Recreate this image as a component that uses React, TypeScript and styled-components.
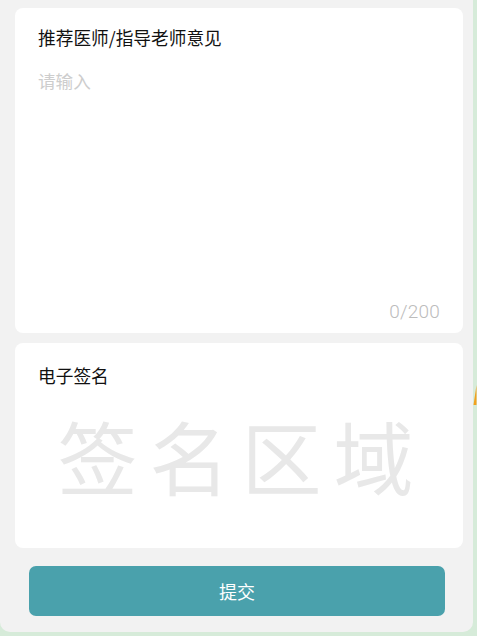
import React from "react";
import styled, { createGlobalStyle } from "styled-components";

const GlobalStyle = createGlobalStyle`
  html, body {
    margin: 0;
    padding: 0;
    height: 100%;
    background: #d6ebd9;
  }
  body {
    font-family: "Noto Sans CJK SC", "Liberation Sans", sans-serif;
    overflow: hidden;
  }
`;

function App(): React.ReactElement {
  return (
    <Page>
      <GlobalStyle />
      <Panel>
        <OpinionCard>
          <Title>推荐医师/指导老师意见</Title>
          <Placeholder>请输入</Placeholder>
          <Counter>0/200</Counter>
        </OpinionCard>
        <SignCard>
          <Title>电子签名</Title>
          <SignArea>签名区域</SignArea>
        </SignCard>
        <SubmitButton type="button">提交</SubmitButton>
      </Panel>
      <Sliver width="4" height="22" viewBox="0 0 4 22">
        <path d="M3.5 0 L0.5 20 L3.5 20 Z" fill="#f2a11e" />
      </Sliver>
    </Page>
  );
}

export default App;

const Page = styled.div`
  position: relative;
  width: 477px;
  height: 636px;
  overflow: hidden;
  background: #d6ebd9;
`;

const Panel = styled.div`
  box-sizing: border-box;
  width: 473px;
  height: 632px;
  padding: 8px 10px 0 15px;
  background: #f2f2f2;
  border-radius: 0 0 10px 10px;
  display: flex;
  flex-direction: column;
`;

const Card = styled.section`
  box-sizing: border-box;
  width: 448px;
  background: #fff;
  border-radius: 8px;
  padding: 16px 23px 0;
`;

const OpinionCard = styled(Card)`
  height: 325px;
  display: flex;
  flex-direction: column;
`;

const SignCard = styled(Card)`
  height: 205px;
  margin-top: 10px;
  padding-top: 19px;
`;

const Title = styled.div`
  font-size: 17.7px;
  line-height: 26px;
  height: 26px;
  color: #111;
`;

const Placeholder = styled.div`
  margin-top: 18px;
  font-size: 17.6px;
  line-height: 26px;
  color: #cdcdcd;
`;

const Counter = styled.div`
  margin-top: auto;
  margin-bottom: 8px;
  text-align: right;
  font-family: "Roboto", "Liberation Sans", sans-serif;
  font-weight: 300;
  font-size: 19px;
  line-height: 26px;
  letter-spacing: 0.2px;
  color: #bcbcbc;
`;

const SignArea = styled.div`
  margin-top: 21px;
  margin-left: 5px;
  text-align: center;
  font-family: "Noto Sans CJK SC", sans-serif;
  font-weight: 400;
  font-size: 80px;
  line-height: 90px;
  letter-spacing: 12px;
  color: #e8e8e8;
  white-space: nowrap;
`;

const SubmitButton = styled.button`
  display: block;
  width: 416px;
  height: 50px;
  margin: 18px 0 0 14px;
  border: none;
  border-radius: 7px;
  background: #4aa1ac;
  color: #fff;
  font-family: inherit;
  font-size: 18px;
`;

const Sliver = styled.svg`
  position: absolute;
  left: 473px;
  top: 385px;
`;
